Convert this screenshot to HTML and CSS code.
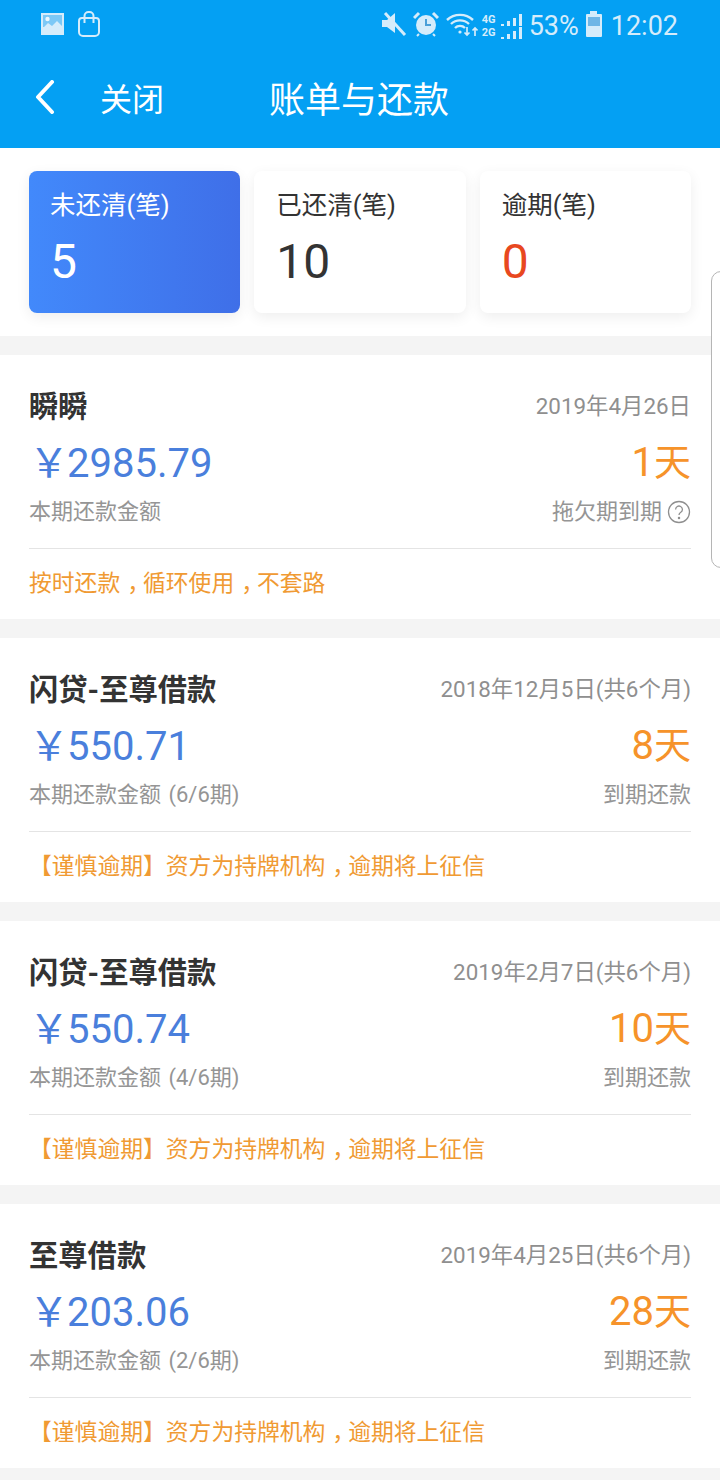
FILE: index.html
```html
<!DOCTYPE html>
<html lang="zh-CN">
<head>
  <meta charset="UTF-8" />
  <meta name="viewport" content="width=device-width, initial-scale=1" />
  <title>账单与还款</title>
  <link rel="stylesheet" href="styles.css">
</head>
<body>
  <header class="top">
    <div class="status">
      <div class="status-left">
        <svg width="24" height="24" viewBox="0 0 24 24"><rect x="1" y="2" width="23" height="22" fill="#d5ecfb"/><rect x="3" y="4" width="19" height="12" fill="#7cc8f6"/><path fill="#d5ecfb" d="M3 17l5-5 4 3 5-5 5 5v3H3z"/><circle cx="7.5" cy="8" r="2.2" fill="#eef8fe"/></svg>
        <svg width="24" height="26" viewBox="0 0 24 26" fill="none" stroke="#d5ecfb" stroke-width="2"><path d="M5 7h14a3 3 0 0 1 3 3v11a4 4 0 0 1-4 4H6a4 4 0 0 1-4-4V10a3 3 0 0 1 3-3z"/><path d="M7.500 12V5a4 4 0 0 1 4-4h1a4 4 0 0 1 4 4v7"/></svg>
      </div>
      <div class="status-right">
        <svg width="26" height="26" viewBox="0 0 26 26"><path fill="#d5ecfb" d="M1 9h5l8-7v20l-8-6H1z"/><path stroke="#d5ecfb" stroke-width="3" d="M4 2l20 22"/></svg>
        <svg width="26" height="26" viewBox="0 0 26 26"><circle cx="13" cy="14" r="10" fill="#d5ecfb"/><path d="M13 8v6h5" fill="none" stroke="#4a9fd8" stroke-width="2"/><path d="M1 7l5-5M25 7l-5-5" stroke="#d5ecfb" stroke-width="3"/><path d="M6 23l-2 2M20 23l2 2" stroke="#d5ecfb" stroke-width="2"/></svg>
        <svg class="wifi" width="32" height="26" viewBox="0 0 32 26" fill="none" stroke="#d5ecfb" stroke-width="2.4"><path d="M1 9a19 19 0 0 1 26 0M5 13a13 13 0 0 1 18 0M9 17a7 7 0 0 1 10 0"/><circle cx="14" cy="21" r="1.6" fill="#d5ecfb" stroke="none"/><path stroke-width="1.7" d="M21 16v8M18.500 21.500l2.500 2.500 2.500-2.500M29 25v-8M26.500 19.500l2.500-2.500 2.500 2.500"/></svg>
        <div class="net">
          <div class="net-row"><span>4G</span><i class="b1"></i><i class="b2"></i><i class="b3"></i><i class="b4"></i></div>
          <div class="net-row"><span>2G</span><i class="b1"></i><i class="b2"></i><i class="b3"></i><i class="b4"></i></div>
        </div>
        <span class="pct">53%</span>
        <svg width="18" height="26" viewBox="0 0 18 26"><path fill="#d5ecfb" d="M5 0h7v3h4a1 1 0 0 1 1 1v21a1 1 0 0 1-1 1H2a1 1 0 0 1-1-1V4a1 1 0 0 1 1-1h3z"/><rect x="3" y="6" width="12" height="9" fill="#6fb6e6"/></svg>
        <span class="time">12:02</span>
      </div>
    </div>
    <div class="nav">
      <svg width="20" height="34" viewBox="0 0 20 34" fill="none" stroke="#fff" stroke-width="4" stroke-linecap="round" stroke-linejoin="round"><path d="M17 2L3 17l14 15"/></svg>
      <span class="close">关闭</span>
      <span class="title">账单与还款</span>
    </div>
  </header>

  <section class="stats">
    <div class="stat stat-active">
      <div class="stat-label">未还清(笔)</div>
      <div class="stat-num">5</div>
    </div>
    <div class="stat">
      <div class="stat-label">已还清(笔)</div>
      <div class="stat-num">10</div>
    </div>
    <div class="stat">
      <div class="stat-label">逾期(笔)</div>
      <div class="stat-num red">0</div>
    </div>
  </section>

  <main class="list">
    <article class="bill">
      <div class="row">
        <h3>瞬瞬</h3>
        <span class="date">2019年4月26日</span>
      </div>
      <div class="row row-amount">
        <span class="amount"><em>￥</em>2985.79</span>
        <span class="days">1<em>天</em></span>
      </div>
      <div class="row">
        <span class="sub">本期还款金额</span>
        <span class="sub help">拖欠期到期
          <svg width="24" height="24" viewBox="0 0 24 24" fill="none" stroke="#8f8f8f" stroke-width="1.3"><circle cx="12" cy="12" r="10.500"/><path d="M8.600 9.400a3.400 3.400 0 1 1 5.200 2.900c-1.200.8-1.800 1.400-1.800 2.700"/><circle cx="12" cy="18" r=".6"/></svg>
        </span>
      </div>
      <p class="note">按时还款<span class="cm">，</span>循环使用<span class="cm">，</span>不套路</p>
    </article>

    <article class="bill">
      <div class="row">
        <h3>闪贷-至尊借款</h3>
        <span class="date">2018年12月5日(共6个月)</span>
      </div>
      <div class="row row-amount">
        <span class="amount"><em>￥</em>550.71</span>
        <span class="days">8<em>天</em></span>
      </div>
      <div class="row">
        <span class="sub">本期还款金额 (6/6期)</span>
        <span class="sub">到期还款</span>
      </div>
      <p class="note">【谨慎逾期】资方为持牌机构<span class="cm">，</span>逾期将上征信</p>
    </article>

    <article class="bill">
      <div class="row">
        <h3>闪贷-至尊借款</h3>
        <span class="date">2019年2月7日(共6个月)</span>
      </div>
      <div class="row row-amount">
        <span class="amount"><em>￥</em>550.74</span>
        <span class="days">10<em>天</em></span>
      </div>
      <div class="row">
        <span class="sub">本期还款金额 (4/6期)</span>
        <span class="sub">到期还款</span>
      </div>
      <p class="note">【谨慎逾期】资方为持牌机构<span class="cm">，</span>逾期将上征信</p>
    </article>

    <article class="bill">
      <div class="row">
        <h3>至尊借款</h3>
        <span class="date">2019年4月25日(共6个月)</span>
      </div>
      <div class="row row-amount">
        <span class="amount"><em>￥</em>203.06</span>
        <span class="days">28<em>天</em></span>
      </div>
      <div class="row">
        <span class="sub">本期还款金额 (2/6期)</span>
        <span class="sub">到期还款</span>
      </div>
      <p class="note">【谨慎逾期】资方为持牌机构<span class="cm">，</span>逾期将上征信</p>
    </article>
  </main>

  <div class="edge-handle"></div>
</body>
</html>
```

FILE: styles.css
```css
* {
  box-sizing: border-box;
}
html, body {
  margin: 0;
  padding: 0;
}
body {
  width: 720px;
  height: 1480px;
  overflow: hidden;
  position: relative;
  background: #f4f4f4;
  font-family: Roboto, "Noto Sans CJK SC", sans-serif;
  color: #333;
}
.top {
  height: 148px;
  background: #04a0f3;
  color: #fff;
}
.status {
  height: 50px;
  padding: 11px 42px 0 40px;
  display: flex;
  justify-content: space-between;
  color: #d5ecfb;
}
.status-left {
  display: flex;
  gap: 13px;
}
.status-right {
  display: flex;
  align-items: flex-start;
  gap: 6px;
}
.wifi {
  margin-left: 1px;
  margin-right: -2px;
}
.net {
  width: 40px;
  padding-top: 2px;
  font-size: 11px;
  line-height: 13px;
  font-weight: 700;
}
.net-row {
  display: flex;
  align-items: flex-end;
  gap: 3.5px;
  height: 13px;
}
.net-row span {
  width: 16px;
}
.net-row i {
  width: 2.5px;
  background: #d5ecfb;
}
.b1 { height: 2px; }
.b2 { height: 5px; }
.b3 { height: 8px; }
.b4 { height: 12px; }
.pct, .time {
  font-size: 27px;
  line-height: 28px;
  padding-top: 1px;
  color: #d5ecfb;
}
.pct {
  margin-left: 1px;
}
.time {
  margin-left: 2px;
}
.nav {
  height: 98px;
  display: flex;
  align-items: center;
  padding: 0 0 4px 35px;
}
.close {
  font-size: 32px;
  margin-left: 45px;
}
.title {
  font-size: 36px;
  margin-left: 105px;
}
.stats {
  height: 188px;
  background: #fff;
  padding: 23px 29px 0;
  display: grid;
  grid-template-columns: repeat(3, 1fr);
  gap: 14px;
  align-items: start;
}
.stat {
  height: 142px;
  background: #fff;
  border-radius: 8px;
  box-shadow: 0 4px 14px rgba(0,0,0,0.07);
  padding: 16px 22px;
}
.stat-active {
  background: linear-gradient(90deg, #4289fb, #3f6fe8);
  color: #fff;
  padding-left: 21px;
}
.stat-label {
  font-size: 25.5px;
  line-height: 36px;
}
.stat-num {
  font-size: 48px;
  line-height: 56px;
  margin-top: 11px;
}
.red {
  color: #e8481f;
}
.list {
  padding-top: 19px;
  display: flex;
  flex-direction: column;
  gap: 19px;
}
.bill {
  height: 264px;
  background: #fff;
  padding: 30px 29px 0;
}
.row {
  display: flex;
  justify-content: space-between;
  align-items: center;
}
.row-amount {
  margin-top: 10px;
}
h3 {
  margin: 0;
  font-size: 29.3px;
  line-height: 44px;
  font-weight: 700;
  color: #333;
}
.date {
  font-size: 22.4px;
  color: #8f8f8f;
  margin-bottom: 6px;
}
.amount {
  font-size: 40px;
  line-height: 48px;
  color: #4a7fdc;
}
.amount em {
  font-style: normal;
  margin-right: -2px;
}
.days {
  font-size: 40px;
  line-height: 48px;
  color: #f6932a;
}
.days em {
  font-style: normal;
  font-size: 37px;
}
.sub {
  font-size: 22px;
  line-height: 48px;
  word-spacing: 2px;
  color: #959595;
}
.help {
  display: flex;
  align-items: center;
  gap: 5px;
}
.note {
  margin: 12px 0 0;
  border-top: 1px solid #e4e4e4;
  padding-top: 18px;
  font-size: 22.8px;
  line-height: 34px;
  color: #f09a33;
}
.cm {
  padding-left: 7px;
  letter-spacing: -7px;
}
.edge-handle {
  position: absolute;
  top: 271px;
  left: 711px;
  width: 20px;
  height: 297px;
  background: #fff;
  border: 1px solid #b5b5b5;
  border-radius: 10px;
}
```
